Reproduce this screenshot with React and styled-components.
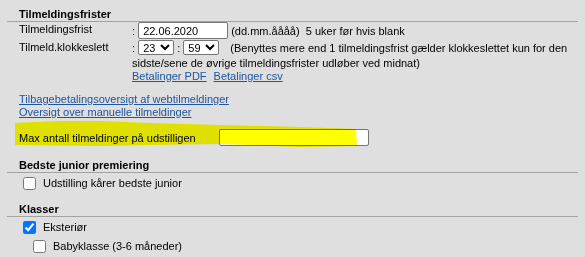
import React from "react";
import styled, { createGlobalStyle } from "styled-components";

const Global = createGlobalStyle`
  html, body { margin: 0; padding: 0; }
  body {
    background: #dfdfdf;
    font-family: "Liberation Sans", Arial, sans-serif;
    font-size: 11px;
    color: #000;
    overflow: hidden;
  }
`;

const Page = styled.div`
  position: relative;
  width: 571px;
  padding: 8px 0 0 7px;
`;

const Section = styled.section`
  margin-top: ${(p) => p.$top || 0}px;
`;

const Heading = styled.div`
  font-weight: bold;
  line-height: 13px;
  padding-left: 12px;
  border-bottom: 1px solid #a3a3a3;
`;

const FormGrid = styled.div`
  display: grid;
  grid-template-columns: 113px 1fr;
  padding-left: 12px;
  margin-top: ${(p) => p.$top || 0}px;
  row-gap: 1px;
`;

const Label = styled.div`
  line-height: 13px;
  padding-top: ${(p) => p.$pt || 0}px;
`;

const Cell = styled.div`
  line-height: 15px;
  padding-right: 4px;
`;

const TextInput = styled.input`
  box-sizing: border-box;
  width: ${(p) => p.$w}px;
  height: 17px;
  border: 1px solid #767676;
  border-radius: 2px;
  background: #fff;
  font-family: "Liberation Sans", Arial, sans-serif;
  font-size: 11px;
  padding: 0 4px;
  margin: 0;
  vertical-align: baseline;
  outline: none;
`;

const Select = styled.select`
  box-sizing: border-box;
  width: 36px;
  height: 15px;
  border: 1px solid #767676;
  border-radius: 2px;
  background: #fff;
  font-family: "Liberation Sans", Arial, sans-serif;
  font-size: 11px;
  padding: 0;
  margin: 0;
`;

const Note = styled.span`
  margin-left: ${(p) => p.$ml || 0}px;
`;

const LinkLine = styled.div`
  line-height: 11px;
  display: flex;
  gap: 7px;
`;

const Link = styled.a`
  color: #1d55a0;
  text-decoration: underline;
  cursor: pointer;
`;

const LinkBlock = styled.div`
  padding-left: 12px;
  margin-top: ${(p) => p.$top || 0}px;
  display: flex;
  flex-direction: column;
  line-height: 13px;
  align-items: flex-start;
`;

const MaxRow = styled.div`
  display: grid;
  grid-template-columns: 200px 150px;
  align-items: center;
  padding-left: 12px;
  margin-top: ${(p) => p.$top || 0}px;
`;

const CheckRow = styled.label`
  display: flex;
  align-items: center;
  gap: 7px;
  height: 13px;
  padding-left: ${(p) => 16 + (p.$indent || 0)}px;
  margin-top: ${(p) => p.$top || 0}px;
  line-height: 13px;
`;

const Box = styled.input`
  width: 13px;
  height: 13px;
  margin: 0;
  accent-color: #0075ff;
`;

const Marker = styled.svg`
  position: absolute;
  left: 0;
  top: 0;
  pointer-events: none;
  mix-blend-mode: multiply;
`;

export default function App() {
  return (
    <>
      <Global />
      <Page>
        <Section>
          <Heading>Tilmeldingsfrister</Heading>
          <FormGrid $top={0}>
            <Label $pt={1}>Tilmeldingsfrist</Label>
            <Cell>
              :&nbsp;<TextInput $w={90} defaultValue="22.06.2020" /> (dd.mm.åååå)&nbsp; 5 uker før hvis blank
            </Cell>
            <Label $pt={1}>Tilmeld.klokkeslett</Label>
            <Cell>
              :&nbsp;
              <Select defaultValue="23">
                <option>23</option>
              </Select>
              &nbsp;:&nbsp;
              <Select defaultValue="59">
                <option>59</option>
              </Select>
              <Note $ml={11}>(Benyttes mere end 1 tilmeldingsfrist gælder klokkeslettet kun for den sidste/sene de øvrige tilmeldingsfrister udløber ved midnat)</Note>
              <LinkLine>
                <Link>Betalinger PDF</Link>
                <Link>Betalinger csv</Link>
              </LinkLine>
            </Cell>
          </FormGrid>
          <LinkBlock $top={11}>
            <Link>Tilbagebetalingsoversigt af webtilmeldinger</Link>
            <Link>Oversigt over manuelle tilmeldinger</Link>
          </LinkBlock>
          <MaxRow $top={10}>
            <span>Max antall tilmeldinger på udstilligen</span>
            <TextInput $w={150} />
          </MaxRow>
        </Section>
        <Section $top={13}>
          <Heading>Bedste junior premiering</Heading>
          <CheckRow $top={4}>
            <Box type="checkbox" />
            <span>Udstilling kårer bedste junior</span>
          </CheckRow>
        </Section>
        <Section $top={13}>
          <Heading>Klasser</Heading>
          <CheckRow $top={4}>
            <Box type="checkbox" defaultChecked />
            <span>Eksteriør</span>
          </CheckRow>
          <CheckRow $top={6} $indent={10}>
            <Box type="checkbox" />
            <span>Babyklasse (3-6 måneder)</span>
          </CheckRow>
          <CheckRow $top={5} $indent={10}>
            <Box type="checkbox" defaultChecked />
            <span></span>
          </CheckRow>
        </Section>
        <Marker width="585" height="257" viewBox="0 0 585 257">
          <path
            d="M15 123 L60 121 L100 121 L150 123 L220 125 L300 127 L356 129 L357 146 L300 147 L220 144 L150 145 L100 146 L15 145 Z"
            fill="#ffff00"
          />
        </Marker>
      </Page>
    </>
  );
}
